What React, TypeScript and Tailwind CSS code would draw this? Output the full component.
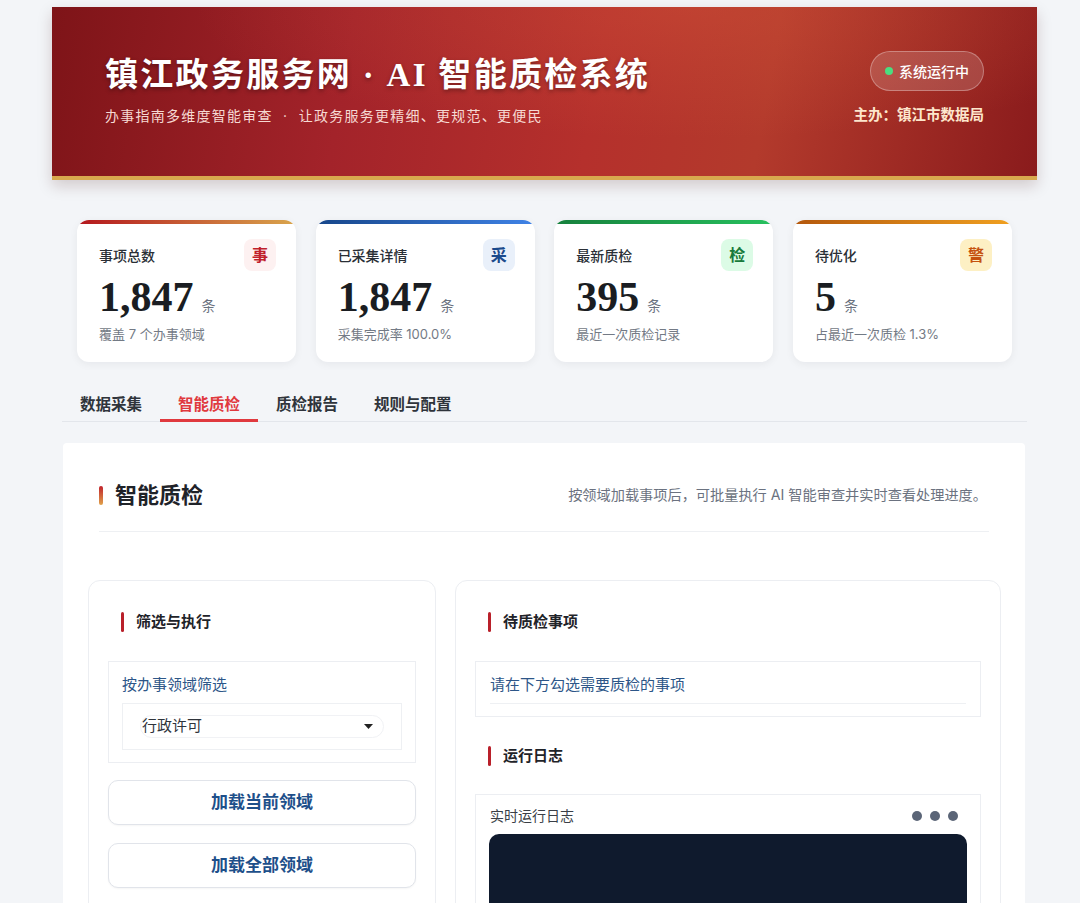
import React from 'react';

const sans = "font-['Inter','Noto_Sans_CJK_SC',sans-serif]";

type Stat = {
  label: string;
  badge: string;
  value: string;
  sub: string;
  bar: string;
  badgeCls: string;
};

const stats: Stat[] = [
  {
    label: '事项总数',
    badge: '事',
    value: '1,847',
    sub: '覆盖 7 个办事领域',
    bar: 'bg-[linear-gradient(90deg,#b4161d,#d9a54c)]',
    badgeCls: 'bg-[#fdf1f1] text-[#c0202a]',
  },
  {
    label: '已采集详情',
    badge: '采',
    value: '1,847',
    sub: '采集完成率 100.0%',
    bar: 'bg-[linear-gradient(90deg,#17468a,#3f82e6)]',
    badgeCls: 'bg-[#e9f0fa] text-[#1b4a8c]',
  },
  {
    label: '最新质检',
    badge: '检',
    value: '395',
    sub: '最近一次质检记录',
    bar: 'bg-[linear-gradient(90deg,#16803c,#27c05e)]',
    badgeCls: 'bg-[#dcfbe6] text-[#177a3b]',
  },
  {
    label: '待优化',
    badge: '警',
    value: '5',
    sub: '占最近一次质检 1.3%',
    bar: 'bg-[linear-gradient(90deg,#b3570c,#f0a020)]',
    badgeCls: 'bg-[#fdf0c4] text-[#c5520f]',
  },
];

const tabs = ['数据采集', '智能质检', '质检报告', '规则与配置'];

function SectionTitle({ text }: { text: string }) {
  return (
    <div className="flex items-center h-[20px]">
      <span className="w-[3px] h-[20px] bg-[#b9202a] rounded-sm" />
      <span className="ml-[12px] text-[15px] font-bold text-[#1f2329] leading-[20px]">{text}</span>
    </div>
  );
}

function StatCard({ s }: { s: Stat }) {
  return (
    <div className="relative bg-white rounded-xl overflow-hidden shadow-[0_2px_8px_rgba(15,23,42,0.06)] h-[142px]">
      <div className={`h-[4px] ${s.bar}`} />
      <div className="pt-[15px] pl-[22px] pr-[20px]">
        <div className="flex items-center justify-between">
          <span className="text-[14px] text-[#2a2f36] font-medium">{s.label}</span>
          <span
            className={`w-[32px] h-[32px] rounded-lg flex items-center justify-center text-[16px] font-bold ${s.badgeCls}`}
          >
            {s.badge}
          </span>
        </div>
        <div className="flex items-baseline mt-[2px] h-[48px]">
          <span className="font-['Liberation_Serif',serif] font-bold text-[42px] leading-[48px] text-[#1a1d22]">
            {s.value}
          </span>
          <span className="ml-[8px] text-[14px] text-[#6b7280]">条</span>
        </div>
        <div className="mt-[4px] text-[13px] text-[#737a85]">{s.sub}</div>
      </div>
    </div>
  );
}

export default function App() {
  return (
    <div className={`min-h-[903px] bg-[#f3f5f8] ${sans} overflow-hidden`}>
      <div className="ml-[52px] w-[985px] pt-[7px]">
        {/* Header */}
        <header className="relative h-[173px] border-b-4 border-[#d8a84e] bg-[linear-gradient(100deg,#7e1418_0%,#a3232a_30%,#b5302c_55%,#b33a2c_72%,#8a1b1c_100%)] shadow-[0_6px_14px_rgba(60,10,10,0.18)] overflow-hidden">
          <div className="absolute inset-0 bg-[radial-gradient(ellipse_at_65%_0%,rgba(215,90,60,0.35),transparent_55%)]" />
          <div className="relative flex justify-between px-[53px] pt-[44px]">
            <div>
              <h1 className="font-['Liberation_Serif','Noto_Sans_CJK_SC',serif] font-bold text-[33px] leading-[48px] tracking-[2.3px] text-white [text-shadow:0_2px_4px_rgba(0,0,0,0.35)]">
                镇江政务服务网 · AI 智能质检系统
              </h1>
              <p className="mt-[7px] text-[14px] leading-[20px] tracking-[1.25px] text-[#f6d9d3] whitespace-pre">
                办事指南多维度智能审查  ·  让政务服务更精细、更规范、更便民
              </p>
            </div>
            <div className="flex flex-col items-end">
              <div className="h-[40px] px-[14px] rounded-full border border-white/30 bg-white/15 flex items-center gap-[6px]">
                <span className="w-[8px] h-[8px] rounded-full bg-[#4ade80]" />
                <span className="text-[14px] text-white font-medium">系统运行中</span>
              </div>
              <div className="mt-[14px] text-[14.5px] leading-[20px] font-bold text-[#fde6cc]">主办：镇江市数据局</div>
            </div>
          </div>
        </header>

        {/* Stats */}
        <div className="mt-[40px] px-[25px] grid grid-cols-4 gap-[19.5px]">
          {stats.map((s) => (
            <StatCard key={s.label} s={s} />
          ))}
        </div>

        {/* Tabs */}
        <div className="mt-[27px] ml-[10px] mr-[10px] flex border-b border-[#e3e6eb]">
          {tabs.map((t) => {
            const active = t === '智能质检';
            return (
              <div
                key={t}
                className={`px-[18px] pt-[5px] pb-[3px] text-[15.5px] leading-[22px] font-semibold border-b-[3px] -mb-px ${
                  active ? 'text-[#e0393e] border-[#e0393e]' : 'text-[#2f343b] border-transparent'
                }`}
              >
                {t}
              </div>
            );
          })}
        </div>

        {/* Main panel */}
        <main className="mt-[21px] ml-[11px] mr-[12px] bg-white rounded-sm pt-[38px] pb-[40px] min-h-[480px]">
          <div className="mx-[36px] flex items-center justify-between pb-[22px] border-b border-[#eef0f3]">
            <div className="flex items-center">
              <span className="w-[4px] h-[19px] rounded-sm bg-[linear-gradient(180deg,#c0222c,#e0a24a)]" />
              <h2 className="ml-[12px] text-[22px] font-bold text-[#1f2329] leading-[28px]">智能质检</h2>
            </div>
            <p className="mr-[2px] text-[14.2px] text-[#6b7280]">按领域加载事项后，可批量执行 AI 智能审查并实时查看处理进度。</p>
          </div>

          <div className="mt-[48px] ml-[25px] mr-[24px] grid grid-cols-[348px_1fr] gap-[19px]">
            {/* Left card */}
            <section className="border border-[#eceef2] rounded-xl px-[19px] pt-[31px] pb-[20px]">
              <div className="ml-[13px]">
                <SectionTitle text="筛选与执行" />
              </div>
              <div className="mt-[29px] border border-[#eceef2] px-[13px] pt-[12px] pb-[12px]">
                <div className="text-[15px] leading-[22px] text-[#2d5688]">按办事领域筛选</div>
                <div className="mt-[7px] border border-[#eef0f3] px-[17px] py-[11px]">
                  <div className="h-[23px] rounded-full border border-[#f1f2f5] flex items-center justify-between pl-[1px] pr-[10px]">
                    <span className="text-[15px] text-[#2f343b]">行政许可</span>
                    <svg width="9" height="5" viewBox="0 0 9 5">
                      <path d="M0 0h9L4.5 5z" fill="#222" />
                    </svg>
                  </div>
                </div>
              </div>
              <button className="mt-[17px] w-full h-[45px] rounded-[10px] border border-[#e1e4ea] bg-white text-[17px] font-bold text-[#1d4f8a] shadow-[0_1px_2px_rgba(0,0,0,0.04)]">
                加载当前领域
              </button>
              <button className="mt-[18px] w-full h-[45px] rounded-[10px] border border-[#e1e4ea] bg-white text-[17px] font-bold text-[#1d4f8a] shadow-[0_1px_2px_rgba(0,0,0,0.04)]">
                加载全部领域
              </button>
            </section>

            {/* Right card */}
            <section className="border border-[#eceef2] rounded-xl px-[19px] pt-[31px] pb-[20px]">
              <div className="ml-[13px]">
                <SectionTitle text="待质检事项" />
              </div>
              <div className="mt-[29px] border border-[#eceef2] px-[14px] pt-[12px] pb-[12px]">
                <div className="text-[15px] leading-[22px] text-[#2d5688] pb-[7px] border-b border-[#eef0f3]">
                  请在下方勾选需要质检的事项
                </div>
              </div>
              <div className="mt-[29px] ml-[13px]">
                <SectionTitle text="运行日志" />
              </div>
              <div className="mt-[28px] border border-[#eceef2] px-[13px] pt-[11px]">
                <div className="flex items-center justify-between">
                  <span className="text-[14px] leading-[20px] text-[#3a3f47] ml-[1px]">实时运行日志</span>
                  <div className="flex gap-[8px] mr-[9px]">
                    <span className="w-[10px] h-[10px] rounded-full bg-[#5b6577]" />
                    <span className="w-[10px] h-[10px] rounded-full bg-[#5b6577]" />
                    <span className="w-[10px] h-[10px] rounded-full bg-[#5b6577]" />
                  </div>
                </div>
                <div className="mt-[8px] h-[220px] rounded-[10px] bg-[#0f1a2d]" />
              </div>
            </section>
          </div>
        </main>
      </div>
    </div>
  );
}
